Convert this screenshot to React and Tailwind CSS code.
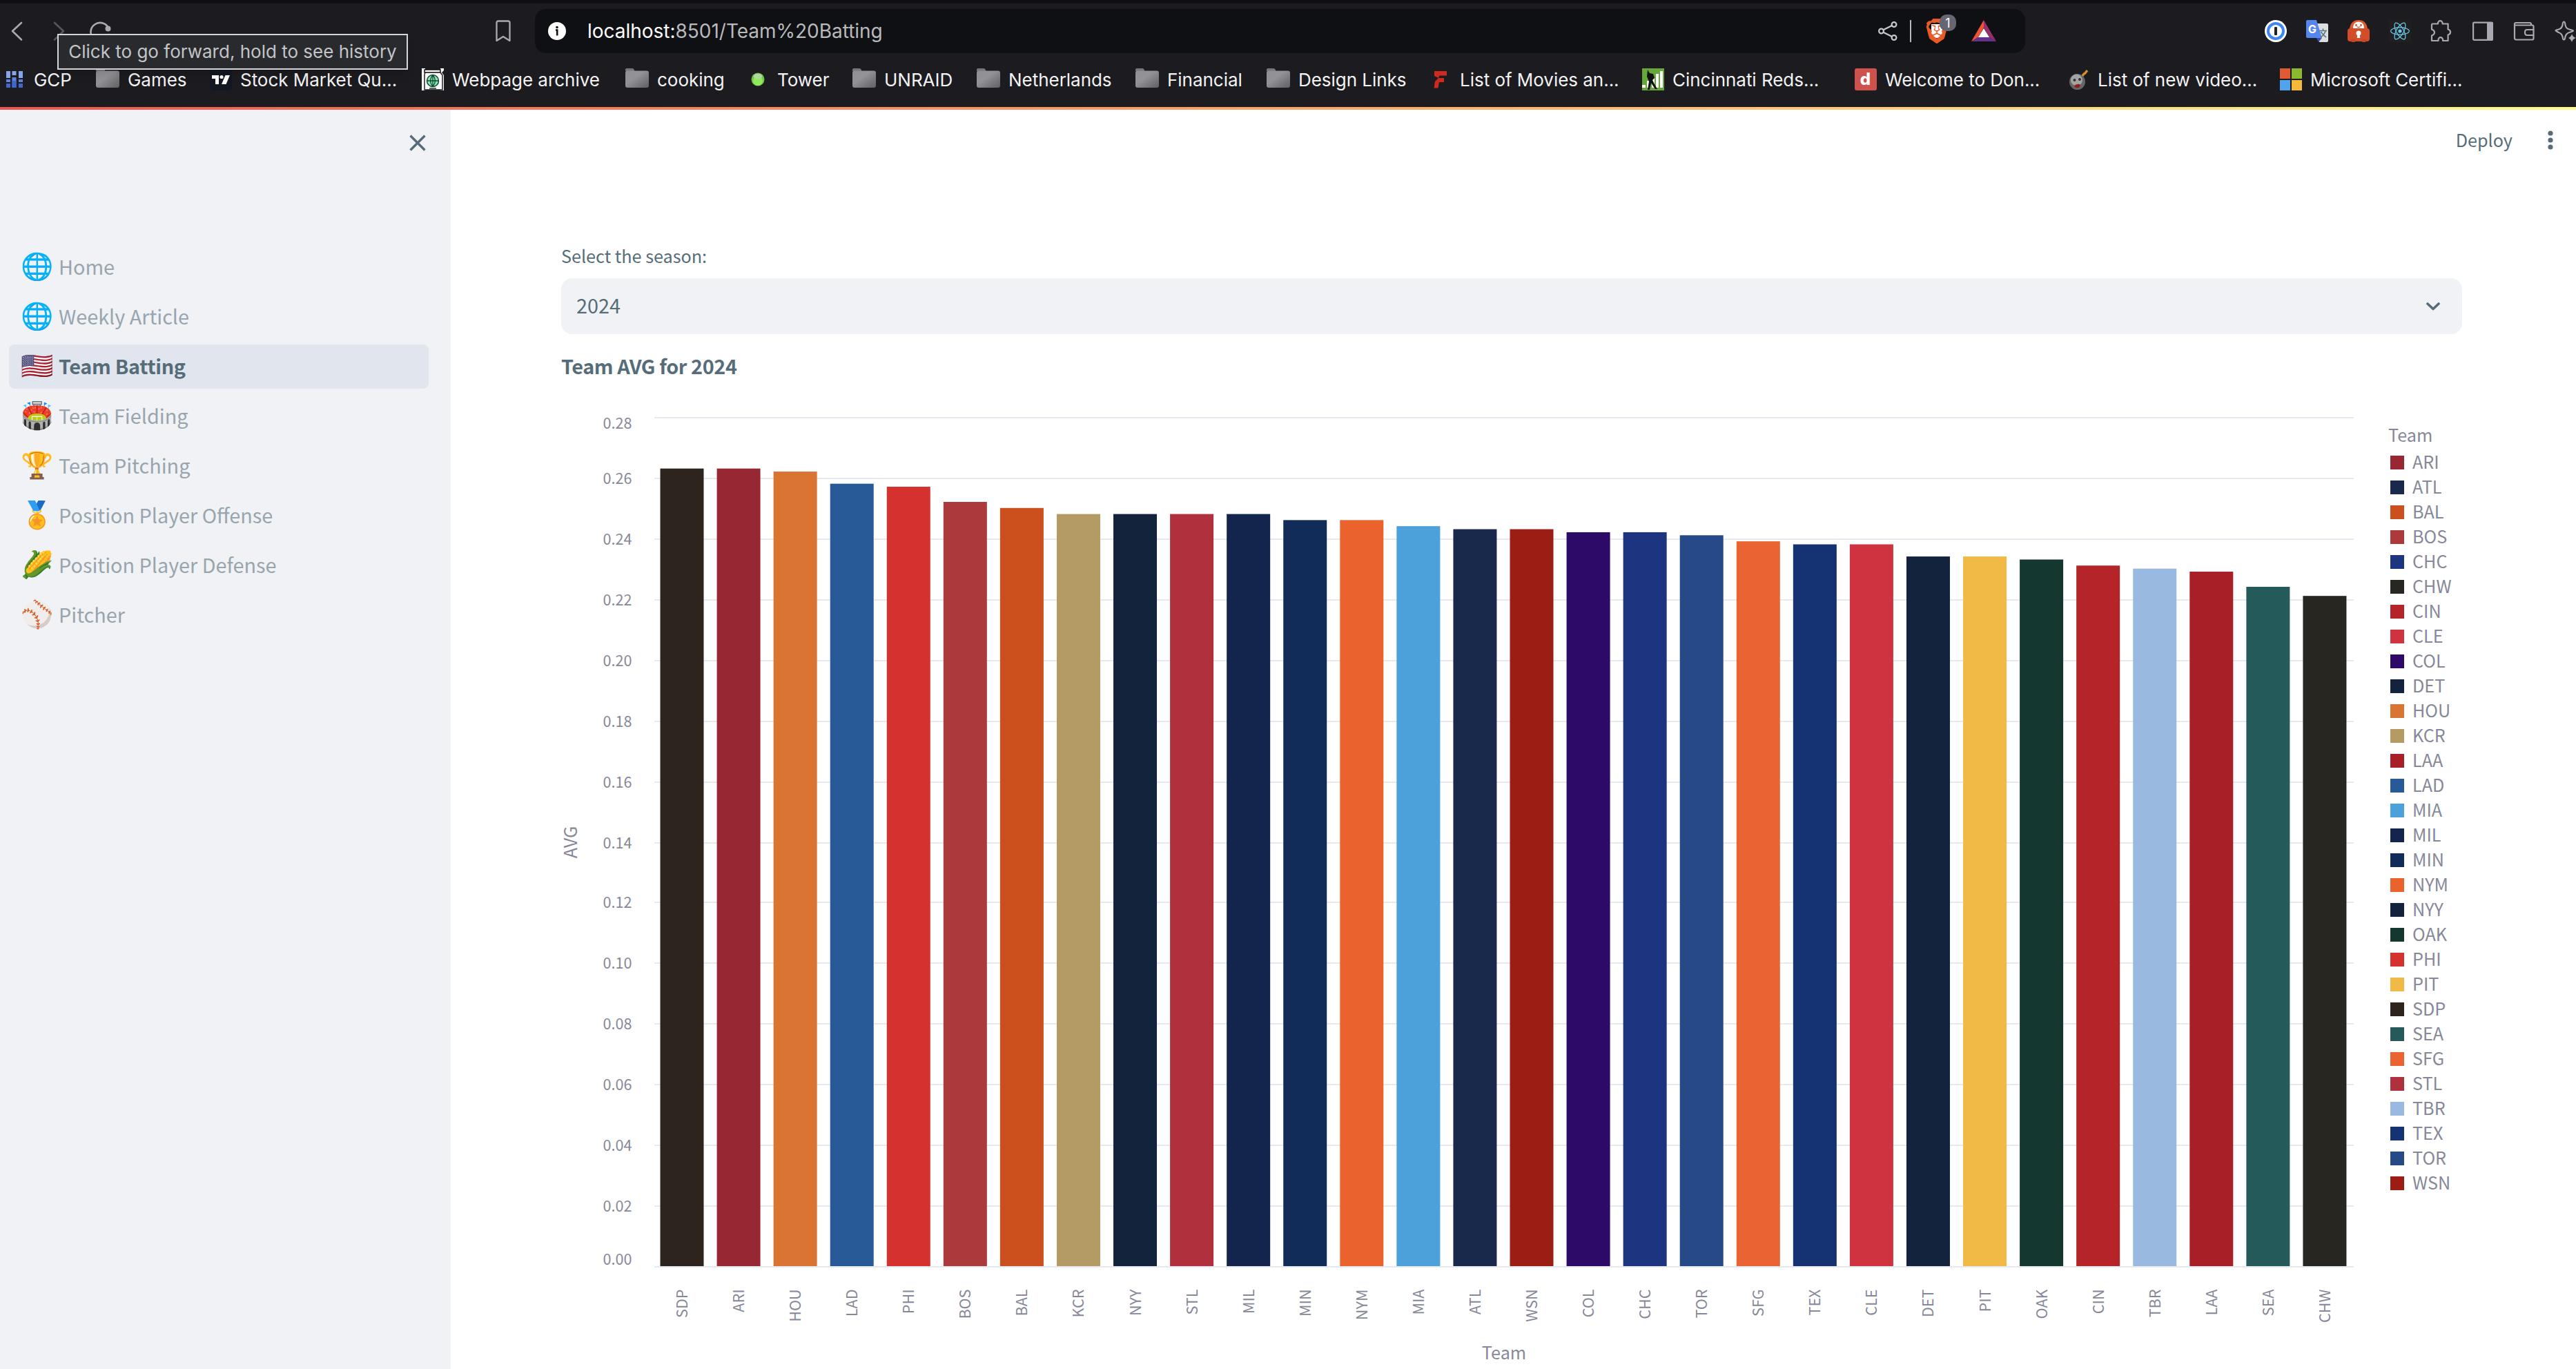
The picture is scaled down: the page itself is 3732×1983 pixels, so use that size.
import React from "react";
import { SiBrave, SiReact } from "react-icons/si";

const TEAM_COLORS = {
  ARI: "#972733", ATL: "#19294c", BAL: "#cc501e", BOS: "#ac393b", CHC: "#1d3580", CHW: "#272621",
  CIN: "#b42428", CLE: "#ce333f", COL: "#2e0a68", DET: "#13233d", HOU: "#d97433", KCR: "#b49b64",
  LAA: "#a81f28", LAD: "#275a96", MIA: "#4da1db", MIL: "#14254d", MIN: "#112c59", NYM: "#ea632d",
  NYY: "#13233c", OAK: "#143730", PHI: "#d5322f", PIT: "#f1ba47", SDP: "#2d241e", SEA: "#255a5a",
  SFG: "#ea6433", STL: "#b1303e", TBR: "#99b9e1", TEX: "#153272", TOR: "#264a87", WSN: "#9b1d14",
};

const AVERAGES = [
  ["SDP", 0.263], ["ARI", 0.263], ["HOU", 0.262], ["LAD", 0.258], ["PHI", 0.257], ["BOS", 0.252],
  ["BAL", 0.25], ["KCR", 0.248], ["NYY", 0.248], ["STL", 0.248], ["MIL", 0.248], ["MIN", 0.246],
  ["NYM", 0.246], ["MIA", 0.244], ["ATL", 0.243], ["WSN", 0.243], ["COL", 0.242], ["CHC", 0.242],
  ["TOR", 0.241], ["SFG", 0.239], ["TEX", 0.238], ["CLE", 0.238], ["DET", 0.234], ["PIT", 0.234],
  ["OAK", 0.233], ["CIN", 0.231], ["TBR", 0.23], ["LAA", 0.229], ["SEA", 0.224], ["CHW", 0.221],
];

const BOOKMARKS = [
  { label: "GCP", icon: "gcp", width: 134 },
  { label: "Games", icon: "folder", width: 165 },
  { label: "Stock Market Qu...", icon: "tv", width: 307 },
  { label: "Webpage archive", icon: "archive", width: 295 },
  { label: "cooking", icon: "folder", width: 176 },
  { label: "Tower", icon: "dot", width: 153 },
  { label: "UNRAID", icon: "folder", width: 180 },
  { label: "Netherlands", icon: "folder", width: 230 },
  { label: "Financial", icon: "folder", width: 190 },
  { label: "Design Links", icon: "folder", width: 236 },
  { label: "List of Movies an...", icon: "f", width: 308 },
  { label: "Cincinnati Reds...", icon: "fangraphs", width: 308 },
  { label: "Welcome to Don...", icon: "d", width: 308 },
  { label: "List of new video...", icon: "bomb", width: 308 },
  { label: "Microsoft Certifi...", icon: "ms", width: 300 },
];

const PAGES = [
  ["🌐", "Home"], ["🌐", "Weekly Article"], ["🇺🇸", "Team Batting"], ["🏟️", "Team Fielding"],
  ["🏆", "Team Pitching"], ["🏅", "Position Player Offense"], ["🌽", "Position Player Defense"], ["⚾\uFE0F", "Pitcher"],
];

function BookmarkIcon({ kind }) {
  if (kind === "folder")
    return (
      <svg width="34" height="32" viewBox="0 0 34 32" className="shrink-0">
        <defs>
          <linearGradient id="folder" x1="0" y1="0" x2="1" y2="1">
            <stop offset="0" stopColor="#8f8f96" /><stop offset="0.4" stopColor="#929298" /><stop offset="1" stopColor="#606062" />
          </linearGradient>
        </defs>
        <path d="M0 4V1.5Q0 0 2 0H10Q12 0 12.500 1.500L13.500 4Z" fill="#77777b" />
        <rect y="3.500" width="34" height="24.500" rx="3" fill="url(#folder)" />
      </svg>
    );
  return (
    <svg width="32" height="32" viewBox="0 0 32 32" className="shrink-0">
      {kind === "gcp" && (
        <g>
          <path d="M4 4h6v10H4zM12.500 4h6v6h-6zM22 4h6v10h-6z" fill="#86a4ea" />
          <path d="M4 16h6v4H4zM12.500 13h6v15h-6zM22 16h6v4h-6z" fill="#5f83dd" />
          <path d="M4 22h6v6H4zM12.500 18h6v10h-6zM22 22h6v6h-6z" fill="#3e66cf" />
        </g>
      )}
      {kind === "tv" && (
        <g>
          <rect width="32" height="32" rx="5" fill="#131722" />
          <path d="M3 10h10v13H8v-8H3z" fill="#fff" /><circle cx="17" cy="12.500" r="2.600" fill="#fff" /><path d="M22.500 10H29l-5.500 13H17z" fill="#fff" />
        </g>
      )}
      {kind === "archive" && (
        <g>
          <path d="M0 0h5v32H0zM27 0h5v3l-3 3 3 4v22h-5z" fill="#fff" />
          <path d="M4 2h23v4H4z" fill="#fff" stroke="#111" strokeWidth="1.500" />
          <path d="M5 6h22l3 4v21H4V9z" fill="#fff" stroke="#222" strokeWidth="1.500" />
          <circle cx="16" cy="18" r="8.500" fill="#86e8b4" stroke="#15462f" strokeWidth="1.500" />
          <path d="M7.500 18h17M16 9.500v17M16 9.500q-7 8.500 0 17M16 9.500q7 8.500 0 17M11 29h10" fill="none" stroke="#15462f" strokeWidth="1.300" />
        </g>
      )}
      {kind === "dot" && <><circle cx="16" cy="16" r="9.500" fill="#6fc544" /><circle cx="16" cy="18" r="7" fill="#8fe95a" /><ellipse cx="16" cy="11.500" rx="6" ry="3.800" fill="#b0d6a6" /></>}
      {kind === "f" && (
        <path d="M7 4h18v6.500H14.500l-1.500 3.500h8v6h-7l-1.500 8.500H6.500L8 19l5-5-6-3z" fill="#ce2a20" />
      )}
      {kind === "fangraphs" && (
        <g>
          <rect width="32" height="32" fill="#67a83a" />
          <path d="M0 24h5v4H0zM7 18h5v10H7zM14 14h4v14h-4zM20 8h4v20h-4zM26 4h4v24h-4z" fill="#fff" />
          <path d="M8 2l3 5 5 1 2 6-3 3 3 6 4 7h-3l-6-9-2 10H8l2-12-3-7z" fill="#111" />
        </g>
      )}
      {kind === "d" && (
        <g>
          <rect width="32" height="32" rx="3" fill="#cf514c" />
          <text x="15.500" y="24" textAnchor="middle" className="font-['Inter'] text-[24px] font-extrabold" fill="#fff">d</text>
        </g>
      )}
      {kind === "bomb" && (
        <g>
          <path d="M21 12l4-5M25 8l4-5" stroke="#d98d2b" strokeWidth="3.500" />
          <circle cx="14.500" cy="19.500" r="11.500" fill="#666" /><circle cx="13.500" cy="17" r="8.500" fill="#a3a3a3" />
          <circle cx="10.500" cy="17" r="2" fill="#333" /><circle cx="18" cy="16" r="2" fill="#333" /><path d="M10 25q6-4 9-1l-2 4h-5z" fill="#8d1f1d" />
        </g>
      )}
      {kind === "ms" && (
        <g>
          <path d="M0 0h15v15H0z" fill="#e05a33" /><path d="M17 0h15v15H17z" fill="#8bb82f" />
          <path d="M0 17h15v15H0z" fill="#51a3ec" /><path d="M17 17h15v15H17z" fill="#f4b93b" />
        </g>
      )}
    </svg>
  );
}

function Extensions() {
  return (
    <div className="flex items-center gap-7">
      <svg width="32" height="32" viewBox="0 0 32 32">
        <circle cx="16" cy="16" r="16" fill="#fff" /><circle cx="16" cy="16" r="11" fill="none" stroke="#3e86f5" strokeWidth="4" /><rect x="14" y="10" width="4" height="12" rx="1" fill="#222" />
      </svg>
      <svg width="32" height="32" viewBox="0 0 32 32">
        <path d="M12 5h18q2 0 2 2v23q0 2-2 2H19z" fill="#dcdfe1" /><path d="M15 26h8l-5 6z" fill="#3a4bb0" />
        <path d="M2 0h13l8 26H2q-2 0-2-2V2Q0 0 2 0z" fill="#5585ee" />
        <text x="3" y="19" className="font-['Inter'] text-[16px] font-bold" fill="#fff">G</text>
        <path d="M19.500 15.500H30M24.500 12.500v3M28 16q-2 6-7 9M21.500 17q3 5 7.500 8" fill="none" stroke="#63777f" strokeWidth="1.700" />
      </svg>
      <svg width="32" height="32" viewBox="0 0 32 32">
        <path d="M3 15C3 4 9 0 16 0s13 4 13 15z" fill="#db5a30" /><circle cx="16" cy="10.500" r="8" fill="#fff" />
        <circle cx="12.500" cy="7.500" r="1.400" fill="#d24d2a" /><circle cx="19.500" cy="7.500" r="1.400" fill="#d24d2a" /><path d="M13.500 9.500q2.500 2 5 0" stroke="#d24d2a" fill="none" strokeWidth="1.300" />
        <rect y="12" width="32" height="19" rx="4" fill="#d24d2a" /><path d="M4 28h7v4H6zM21 28h7l-2 4h-5z" fill="#c44425" />
        <circle cx="16" cy="19" r="3.500" fill="#fff" /><path d="M14.500 20h3l.8 6h-4.600z" fill="#fff" />
      </svg>
      <div className="flex size-8 items-center justify-center bg-[#202020]"><SiReact className="size-7 text-[#6ac4e6]" /></div>
      <svg width="32" height="32" viewBox="0 0 32 32" fill="none" stroke="#a9a9b1" strokeWidth="2.200" strokeLinejoin="round">
        <path d="M3.500 5.500h7.500V4.500a3.300 3.300 0 0 1 6.600 0v1h8v8q3.500 1 3.500 4t-3.500 4v8.500h-7.500v-1.500a3.300 3.300 0 0 0-6.600 0V30H2v-7.500q4-1.500 4-4.500t-4-4.500V7q0-1.500 1.500-1.500z" />
      </svg>
      <svg width="32" height="32" viewBox="0 0 32 32">
        <rect x="2.100" y="3.600" width="27.800" height="25.300" rx="1.500" fill="none" stroke="#a9a9b1" strokeWidth="2.200" /><rect x="22" y="3" width="9" height="26.500" rx="1.500" fill="#a9a9b1" />
      </svg>
      <svg width="32" height="32" viewBox="0 0 32 32" fill="none" stroke="#a9a9b1" strokeWidth="2.200" strokeLinejoin="round">
        <path d="M29.500 14.500V9.500q0-2-2-2H2v18.500q0 2.500 2.500 2.500H27.500q2 0 2-2V22M2 7.500V6q0-2 2-2h20q2 0 2 2v1" />
        <path d="M29.500 14H20q-3 0-3 4t3 4h9.500z" />
      </svg>
      <svg width="31" height="32" viewBox="0 0 31 32" fill="none" stroke="#a9a9b1" strokeWidth="2.200" strokeLinejoin="round">
        <path d="M13.500 2.500q1.500 0 1.800 3.500.7 6.500 6 7.500l5 1.500q1.500.8-.5 1.500l-4.500 1.500q-5 1.500-6 7-.3 3.500-1.800 3.500t-1.800-3.500q-1-5.500-6-7L2.500 16q-2-.7 0-1.500l3.500-1q5-1.500 5.700-7.500.3-3.500 1.800-3.500z" /><path d="M25 20q1 4.500 6 6-4.500 1-6 6-1.500-4.500-5-6 4-1.500 5-6z" fill="#a9a9b1" stroke="none" />
      </svg>
    </div>
  );
}

function Toolbar() {
  return (
    <div className="flex h-[80px] items-center">
      <svg width="170" height="80" viewBox="0 5 170 80" fill="none" strokeWidth="2.600" strokeLinecap="round" strokeLinejoin="round" className="shrink-0">
        <path d="M31 33 18 45l13 12.500" stroke="#a9a9b1" />
        <path d="M79 33l13 12-13 12.500" stroke="#56565c" />
        <path d="M158 43A13.500 13.500 0 1 0 158 50" stroke="#a9a9b1" /><circle cx="156.500" cy="41.500" r="4" fill="#a9a9b1" />
      </svg>
      <svg width="22" height="32" viewBox="0 0 22 32" className="ml-[548px] shrink-0" fill="none" stroke="#a9a9b1" strokeWidth="2.300" strokeLinejoin="round">
        <path d="M1.500 4q0-2.500 2.500-2.500h14q2.500 0 2.500 2.500v26L11 24 1.500 30z" />
      </svg>
      <div className="ml-[35px] flex h-16 w-[2159px] shrink-0 items-center rounded-[16px] bg-[#0f1014] pl-[19px]">
        <svg width="26" height="26" viewBox="0 0 26 26" className="shrink-0">
          <circle cx="13" cy="13" r="13" fill="#fff" /><circle cx="13" cy="7.500" r="1.800" fill="#111" /><path d="M11 11.500h2.200v8" fill="none" stroke="#111" strokeWidth="2.600" />
        </svg>
        <span className="ml-[31px] w-[600px] text-[28px] tracking-[-0.02px] whitespace-nowrap text-white">localhost:<span className="text-[#b9b9bb]">8501/Team%20Batting</span></span>
        <svg width="28" height="28" viewBox="0 0 28 28" className="ml-[1270px] shrink-0" fill="none" stroke="#c8c8ca" strokeWidth="2.200">
          <circle cx="4.500" cy="14" r="3.400" /><circle cx="23" cy="4.500" r="3.400" /><circle cx="23" cy="23.500" r="3.400" /><path d="M7.500 12.200 20 6M7.500 15.800 20 22" />
        </svg>
        <div className="ml-[18px] h-8 w-0.5 shrink-0 bg-[#b9b9bb]" />
        <div className="relative ml-[19px] flex size-9 shrink-0 items-center justify-center">
          <div className="absolute top-2 left-2.5 h-5 w-4 bg-white" />
          <SiBrave className="relative size-9 text-[#e95a26]" />
          <div className="absolute -top-[6px] left-[22px] flex h-6 w-6 items-center justify-center rounded-[10px] bg-[#646672] text-[18px] text-white">1</div>
        </div>
        <svg width="36" height="32" viewBox="0 0 36 32" className="ml-[32px] shrink-0">
          <path d="M18 0 0 31l10-6 8-14z" fill="#ee5433" /><path d="M18 0l18 31-10-6-8-14z" fill="#97306a" /><path d="M0 31h36l-10-6H10z" fill="#63328b" /><path d="M18 12l8 13H10z" fill="#fff" />
        </svg>
      </div>
      <div className="ml-[347px]"><Extensions /></div>
    </div>
  );
}

function Chart() {
  const left = 948 - 813;
  const top = 604 - 590;
  const step = 2462 / 30;
  return (
    <svg width="2607" height="1393" viewBox="0 0 2607 1393" className="shrink-0 overflow-visible font-['Noto_Sans_CJK_SC',sans-serif]">
      {Array.from({ length: 15 }, (_, i) => {
        const y = top + Math.round((615 * i) / 14) * 2;
        const shift = i === 0 ? 8 : i === 14 ? -11 : 0;
        return (
          <g key={i}>
            <rect x={left} y={y} width="2462" height="2" fill="#e6e9ef" />
            <text x="102.500" y={y + shift + 9} textAnchor="end" className="text-[21.600px]" fill="#868899">{(0.28 - i * 0.02).toFixed(2)}</text>
          </g>
        );
      })}
      {AVERAGES.map(([team, avg], i) => {
        const h = (avg * 1230) / 0.28;
        const x = left + 8.500 + i * step;
        return (
          <g key={team}>
            <rect x={x} y={top + 1230 - h} width="63" height={h} fill={TEAM_COLORS[team]} />
            <text transform={`translate(${x + 39.500} 1277.500) rotate(-90)`} textAnchor="end" className="text-[21.600px]" fill="#868899">{team}</text>
          </g>
        );
      })}
      <text transform="translate(23 630) rotate(-90)" textAnchor="middle" className="text-[25.200px]" fill="#868899">AVG</text>
      <text x="1366" y="1379" textAnchor="middle" className="text-[25.200px]" fill="#868899">Team</text>
    </svg>
  );
}

function Legend() {
  return (
    <div className="ml-[40px] pt-[22px] text-[25.2px] text-[#868899]">
      <div className="h-10 leading-[35px]">Team</div>
      {Object.keys(TEAM_COLORS).map((team) => (
        <div key={team} className="flex h-9 items-center pl-[3px]">
          <span className="size-5" style={{ backgroundColor: TEAM_COLORS[team] }} />
          <span className="ml-3 pb-[3px] leading-[33px]">{team}</span>
        </div>
      ))}
    </div>
  );
}

export default function App() {
  return (
    <div className="relative flex h-[1983px] w-[3732px] flex-col overflow-hidden bg-white font-['Inter',sans-serif]">
      <header className="h-[155px] shrink-0 border-t-[5px] border-[#0f1014] bg-[#1c1b20]">
        <Toolbar />
        <nav className="flex h-[60px] items-center pl-[5px]">
          {BOOKMARKS.map((b) => (
            <div key={b.label} className="flex shrink-0 items-center gap-3 text-[26px] tracking-[-0.03px] whitespace-nowrap text-[#f3f3f4]" style={{ width: b.width }}>
              <BookmarkIcon kind={b.icon} />
              {b.label}
            </div>
          ))}
        </nav>
        <div className="absolute top-[49px] left-[83px] flex h-[52px] w-[508px] items-center justify-center border-2 border-[#d6d6da] bg-[#292a2e] pb-[2px] text-[26px] whitespace-nowrap text-[#c3c4c8] shadow-lg">
          Click to go forward, hold to see history
        </div>
      </header>
      <div className="h-1 shrink-0 bg-linear-to-r from-[#ee5552] via-[#f8a66d] to-[#fff98a]" />
      <div className="flex flex-1 font-['Noto_Sans_CJK_SC',sans-serif] text-[#566d79]">
        <aside className="w-[653px] shrink-0 bg-[#f0f2f6]">
          <div className="flex h-[192px] justify-end pt-[36px] pr-[36px]">
            <svg width="24" height="24" viewBox="0 0 24 24" stroke="#566d79" strokeWidth="3.400"><path d="M1.500 1.500l21 21M22.500 1.500l-21 21" /></svg>
          </div>
          <nav className="flex flex-col gap-2 pt-1 pr-8 pl-[13px]">
            {PAGES.map(([emoji, label]) => (
              <div key={label} className={label === "Team Batting" ? "flex h-16 items-center rounded-lg bg-[#e1e6ee] pl-[17px] font-bold tracking-[-0.3px] text-[#566d79]" : "flex h-16 items-center pl-[17px] text-[#98a5ae]"}>
                <span className="w-[55px] pb-[2px] font-['Noto_Color_Emoji'] text-[38px] leading-none font-normal">{emoji}</span>
                <span className="pb-[3px] text-[28.8px] whitespace-nowrap">{label}</span>
              </div>
            ))}
          </nav>
        </aside>
        <main className="flex-1 pl-[160px]">
          <div className="flex h-[192px] items-start justify-end gap-[53px] pt-[25px] pr-[33px]">
            <span className="-mr-0.5 text-[25.2px] leading-9">Deploy</span>
            <svg width="8" height="32" viewBox="0 0 8 32" fill="#566d79" className="mt-[3px]"><circle cx="4" cy="6" r="3.600" /><circle cx="4" cy="16" r="3.600" /><circle cx="4" cy="26" r="3.600" /></svg>
          </div>
          <div className="h-[52px] pt-px text-[25.2px] leading-9">Select the season:</div>
          <div className="flex h-[81px] w-[2754px] items-center justify-between rounded-2xl bg-[#f0f2f6] pr-8 pl-[22px]">
            <span className="pb-[3px] text-[28.8px]">2024</span>
            <svg width="20" height="12" viewBox="0 0 20 12" fill="none" stroke="#566d79" strokeWidth="3.600" strokeLinecap="round" strokeLinejoin="round"><path d="M2 2l8 7.500L18 2" /></svg>
          </div>
          <h3 className="h-[106px] pt-[26px] text-[28.8px] leading-10 font-bold tracking-[-0.4px]">Team AVG for 2024</h3>
          <div className="flex">
            <Chart />
            <Legend />
          </div>
        </main>
      </div>
    </div>
  );
}
